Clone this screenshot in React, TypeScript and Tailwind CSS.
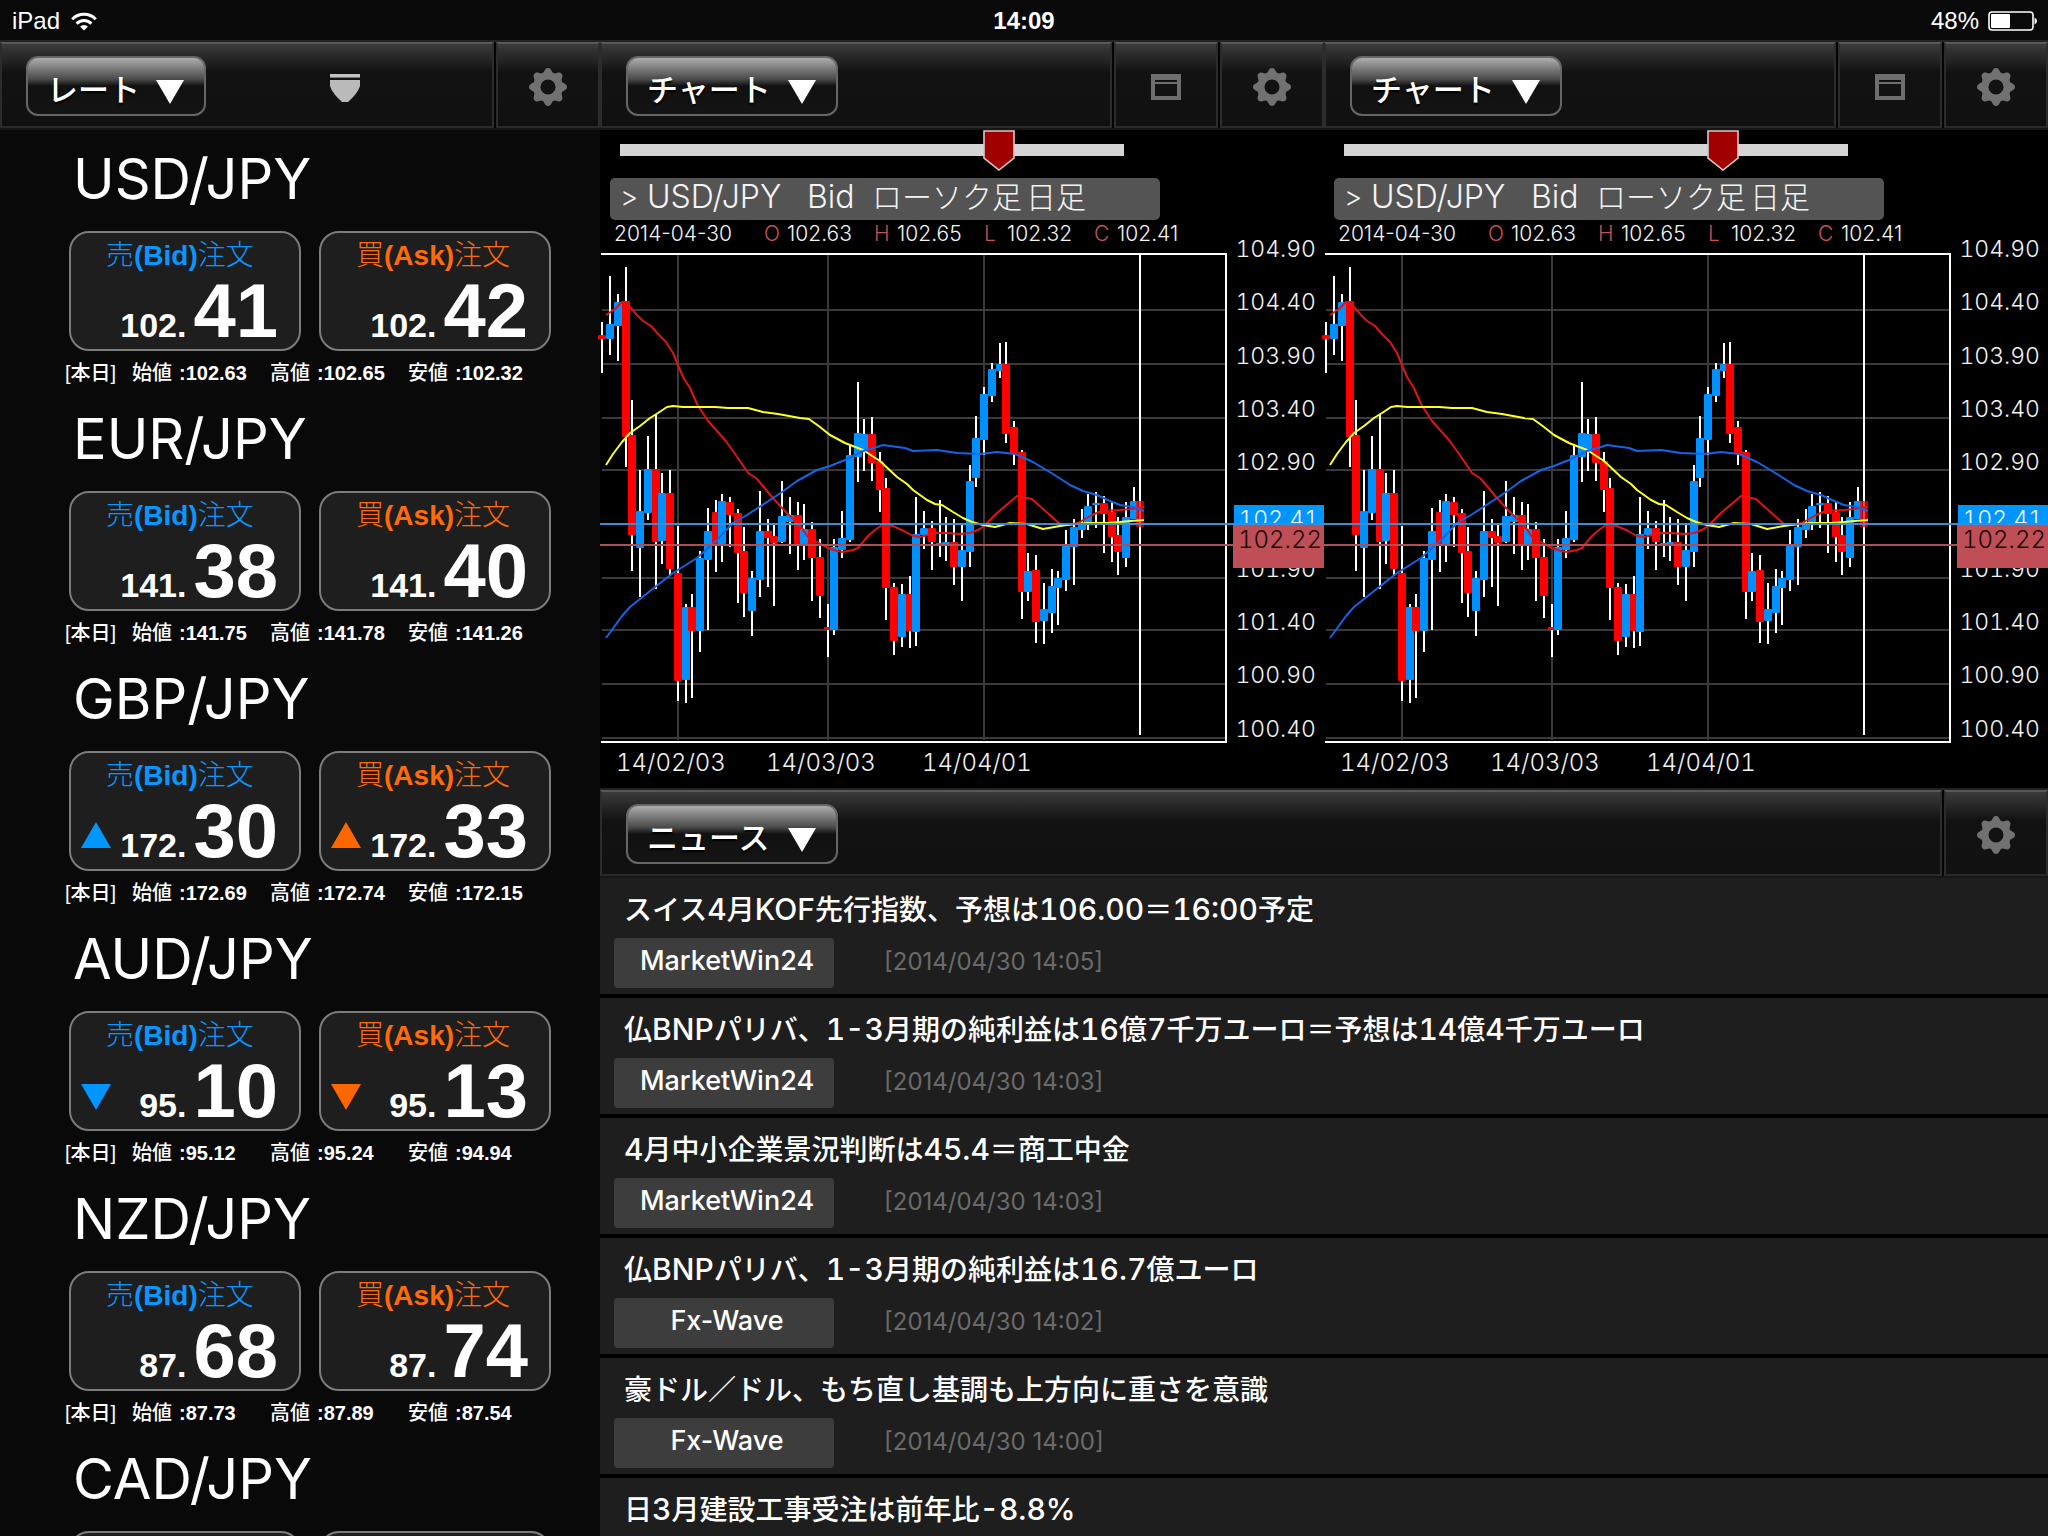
import { useState } from "react";

const UI = "font-['Inter','Noto_Sans_CJK_JP',sans-serif]";
const HELV = "font-['Liberation_Sans','Noto_Sans_CJK_JP',sans-serif]";

type Trend = "up" | "down" | null;
type Rate = {
  pair: string;
  whole: [string, string];
  pips: [string, string];
  trend: Trend;
  open: string;
  high: string;
  low: string;
};

const RATES: Rate[] = [
  { pair: "USD/JPY", whole: ["102.", "102."], pips: ["41", "42"], trend: null, open: "102.63", high: "102.65", low: "102.32" },
  { pair: "EUR/JPY", whole: ["141.", "141."], pips: ["38", "40"], trend: null, open: "141.75", high: "141.78", low: "141.26" },
  { pair: "GBP/JPY", whole: ["172.", "172."], pips: ["30", "33"], trend: "up", open: "172.69", high: "172.74", low: "172.15" },
  { pair: "AUD/JPY", whole: ["95.", "95."], pips: ["10", "13"], trend: "down", open: "95.12", high: "95.24", low: "94.94" },
  { pair: "NZD/JPY", whole: ["87.", "87."], pips: ["68", "74"], trend: null, open: "87.73", high: "87.89", low: "87.54" },
  { pair: "CAD/JPY", whole: ["93.", "93."], pips: ["45", "49"], trend: null, open: "93.60", high: "93.71", low: "93.38" },
];

const NEWS = [
  { title: "スイス4月KOF先行指数、予想は106.00＝16:00予定", source: "MarketWin24", time: "[2014/04/30 14:05]" },
  { title: "仏BNPパリバ、1-3月期の純利益は16億7千万ユーロ＝予想は14億4千万ユーロ", source: "MarketWin24", time: "[2014/04/30 14:03]" },
  { title: "4月中小企業景況判断は45.4＝商工中金", source: "MarketWin24", time: "[2014/04/30 14:03]" },
  { title: "仏BNPパリバ、1-3月期の純利益は16.7億ユーロ", source: "Fx-Wave", time: "[2014/04/30 14:02]" },
  { title: "豪ドル／ドル、もち直し基調も上方向に重さを意識", source: "Fx-Wave", time: "[2014/04/30 14:00]" },
  { title: "日3月建設工事受注は前年比-8.8%", source: "Fx-Wave", time: "[2014/04/30 14:00]" },
];

// x, wick top, body top, body bottom, wick bottom, rising (1) or falling (0)
const CANDLES: number[][] = [
  [2, 72, 85, 89, 123, 0], [10, 26, 74, 89, 105, 1], [18, 44, 52, 76, 111, 1], [26, 17, 51, 187, 217, 0],
  [32, 150, 185, 285, 321, 0], [40, 220, 261, 298, 347, 1], [48, 186, 219, 263, 270, 1], [56, 165, 219, 292, 339, 0],
  [62, 223, 243, 291, 314, 1], [70, 220, 243, 319, 326, 0], [78, 276, 323, 431, 451, 0], [86, 354, 357, 430, 453, 1],
  [92, 344, 357, 381, 448, 0], [100, 301, 308, 381, 402, 1], [108, 258, 281, 310, 380, 1], [116, 250, 262, 295, 322, 0],
  [122, 244, 251, 294, 312, 1], [130, 247, 252, 265, 297, 0], [138, 259, 263, 303, 353, 0], [144, 277, 301, 343, 367, 0],
  [152, 321, 328, 361, 386, 1], [160, 241, 281, 330, 347, 1], [168, 269, 281, 288, 337, 0], [174, 275, 286, 293, 356, 0],
  [182, 231, 266, 292, 293, 1], [190, 247, 265, 272, 304, 1], [198, 252, 265, 294, 320, 0], [204, 254, 279, 294, 310, 1],
  [212, 272, 279, 308, 351, 0], [220, 289, 307, 346, 368, 0], [228, 354, 377, 380, 407, 0], [234, 289, 297, 380, 385, 1],
  [242, 261, 288, 300, 308, 1], [250, 194, 205, 290, 292, 1], [258, 132, 183, 207, 232, 1], [264, 169, 184, 202, 221, 1],
  [272, 167, 184, 213, 231, 0], [280, 202, 211, 240, 262, 0], [286, 228, 238, 338, 370, 0], [294, 333, 337, 391, 405, 0],
  [302, 334, 344, 387, 397, 1], [310, 326, 344, 381, 398, 0], [316, 247, 284, 382, 396, 1], [324, 261, 278, 285, 299, 1],
  [332, 271, 278, 292, 320, 0], [340, 250, 293, 294, 307, 1], [346, 267, 292, 294, 311, 1], [354, 269, 292, 317, 335, 0],
  [362, 274, 300, 317, 351, 1], [370, 215, 231, 302, 317, 1], [376, 166, 188, 228, 237, 1], [384, 137, 144, 190, 205, 1],
  [392, 113, 119, 146, 152, 1], [400, 93, 114, 121, 128, 1], [406, 92, 114, 184, 193, 0], [414, 171, 177, 204, 215, 0],
  [422, 200, 202, 342, 369, 0], [428, 303, 321, 342, 351, 1], [436, 305, 320, 372, 393, 0], [444, 333, 359, 371, 394, 1],
  [452, 319, 336, 363, 383, 1], [458, 321, 328, 338, 375, 1], [466, 280, 295, 330, 341, 1], [474, 269, 277, 297, 335, 1],
  [482, 259, 273, 280, 288, 1], [488, 244, 256, 275, 280, 1], [496, 242, 253, 255, 278, 1], [504, 246, 253, 264, 303, 0],
  [512, 252, 262, 287, 312, 0], [518, 267, 285, 302, 325, 0], [526, 252, 267, 308, 317, 1], [534, 237, 251, 269, 269, 1],
];

const MA_SHORT =
  "6,65 15,59 22,52 30,57 37,65 43,71 51,76 58,84 66,92 73,103 78,115 83,127 90,138 97,154 108,171 125,190 133,201 142,214 148,223 156,228 163,236 172,247 182,258 193,269 202,278 208,287 217,292 228,298 237,301 243,302 253,300 258,298 268,286 275,280 282,275 293,276 304,281 313,286 320,287 328,285 337,283 347,283 360,284 370,283 380,279 385,275 397,263 417,246 432,249 443,259 460,274 467,275 478,273 492,265 502,261 520,260 530,259 544,257";
const MA_LONG =
  "6,215 13,204 22,192 30,183 40,176 50,168 58,163 67,157 73,156 83,157 115,157 128,158 148,158 163,162 178,164 200,168 209,169 220,177 230,185 245,193 263,200 280,211 297,227 307,234 313,240 327,250 335,254 342,255 353,262 363,268 372,272 383,275 395,277 410,273 427,274 443,279 460,276 467,275 487,273 507,273 520,272 530,271 544,270";
const MA_MID =
  "6,388 22,366 30,357 50,341 73,323 97,308 108,298 117,290 133,273 147,265 167,252 182,242 197,231 217,220 230,216 245,210 263,201 277,197 283,195 305,198 313,201 337,200 357,203 380,204 397,202 415,204 433,212 453,224 470,235 483,241 497,245 510,251 520,255 533,257 544,261";

const GRID_Y = [60, 114, 168, 220, 328, 380, 434, 488];
const GRID_X = [78, 228, 384];
const PRICES = ["104.90", "104.40", "103.90", "103.40", "102.90", "", "101.90", "101.40", "100.90", "100.40"];

function Gear() {
  return (
    <svg viewBox="-19 -19 38 38" className="w-[38px] h-[38px]" fill="#717171" aria-hidden="true">
      <path
        fillRule="evenodd"
        d="M0-15A15 15 0 1 1 0 15A15 15 0 1 1 0-15ZM0-7.5A7.5 7.5 0 1 0 0 7.5A7.5 7.5 0 1 0 0-7.5Z"
      />
      {[0, 45, 90, 135, 180, 225, 270, 315].map((a) => (
        <path key={a} transform={`rotate(${a})`} d="M-5.5-13L-2.8-17.6Q-2.2-19 0-19Q2.2-19 2.8-17.6L5.5-13Z" />
      ))}
    </svg>
  );
}

function WindowIcon() {
  return (
    <svg viewBox="0 0 30 26" className="w-[30px] h-[26px]" fill="#6e6e6e" aria-hidden="true">
      <path fillRule="evenodd" d="M0 0H30V26H0ZM4 6H26V8H4ZM4 10H26V22H4Z" />
    </svg>
  );
}

const CELL =
  "border-2 border-t-[#585858] border-x-[#2c2c2c] border-b-[#2a2a2a] bg-[linear-gradient(#3b3b3b,#121212_28px,#111)] flex items-center";

function IconCell({ label, children }: { label: string; children: React.ReactNode }) {
  return (
    <button type="button" aria-label={label} className={`${CELL} w-[104px] justify-center pt-[3px]`}>
      {children}
    </button>
  );
}

function Toolbar({ children }: { children: React.ReactNode }) {
  return (
    <div className="flex h-[90px] shrink-0 gap-[2px] bg-[#040404] border-t-2 border-b-2 border-t-[#222] border-b-[#171515]">
      {children}
    </div>
  );
}

function PanelSelect({ value, wide }: { value: string; wide?: boolean }) {
  return (
    <div className={`relative h-[60px] ${wide ? "w-[212px]" : "w-[180px]"}`}>
      <select
        aria-label="パネル"
        defaultValue={value}
        className={`${UI} h-full w-full appearance-none rounded-[12px] border-2 border-[#666] bg-[linear-gradient(#adadad,#4a4a4a_38%,#111_50%,#141414)] pl-[19px] pt-[8px] text-[31px] font-medium text-white [text-shadow:0_2px_2px_#000]`}
      >
        {["レート", "チャート", "ニュース"].map((o) => (
          <option key={o}>{o}</option>
        ))}
      </select>
      <svg viewBox="0 0 28 24" className="pointer-events-none absolute right-[22px] top-[24px] h-6 w-7" fill="#fff" aria-hidden="true">
        <path d="M0 0H28L14 24Z" />
      </svg>
    </div>
  );
}

function StatusBar() {
  return (
    <header className={`${HELV} grid h-[40px] shrink-0 grid-cols-3 items-center bg-[#090909] pt-[2px] text-[24px] leading-8`}>
      <div className="flex items-center gap-[11px] pl-[12px]">
        <span>iPad</span>
        <svg viewBox="0 0 26 19" className="h-[19px] w-[26px]" fill="none" stroke="#fff" strokeWidth="3" aria-hidden="true">
          <path d="M1.2 7.2A16.5 16.5 0 0 1 24.8 7.2" />
          <path d="M5.6 11.6A10.4 10.4 0 0 1 20.4 11.6" />
          <path d="M13 18.6L9 14.6A5.7 5.7 0 0 1 17 14.6Z" fill="#fff" stroke="none" />
        </svg>
      </div>
      <div className="text-center font-bold">14:09</div>
      <div className="flex items-center justify-end gap-[9px] pr-[11px]">
        <span>48%</span>
        <svg viewBox="0 0 49 20" className="h-5 w-[49px]" fill="none" aria-hidden="true">
          <rect x="1" y="1" width="44" height="18" rx="3" stroke="#fff" strokeWidth="1.6" />
          <rect x="3" y="3" width="19" height="14" rx="1" fill="#fff" />
          <path d="M46.5 6.5Q49 7.5 49 10Q49 12.500 46.500 13.5Z" fill="#fff" />
        </svg>
      </div>
    </header>
  );
}

function QuoteButton({ side, whole, pips, trend }: { side: "bid" | "ask"; whole: string; pips: string; trend: Trend }) {
  const bid = side === "bid";
  return (
    <button
      type="button"
      className={`${HELV} flex h-[120px] w-[232px] flex-col items-stretch justify-start rounded-[20px] border-2 border-[#7c7c7c] bg-[#1e1e1e] pt-[9px] text-left`}
    >
      <span className={`pl-[35px] text-[28px] font-light leading-7 ${bid ? "text-[#0a96ff]" : "text-[#ff6a0a]"}`}>
        {bid ? "売" : "買"}
        <b className="font-bold">{bid ? "(Bid)" : "(Ask)"}</b>
        注文
      </span>
      <span className="mt-[11px] flex h-[60px] items-baseline pl-[10px] pr-[21px] font-bold leading-[60px] text-white">
        {trend && (
          <svg
            viewBox="0 0 30 26"
            className={`h-[26px] w-[30px] self-start ${trend === "up" ? "mt-[21px]" : "mt-[23px]"}`}
            fill={bid ? "#0096ff" : "#ff6600"}
            role="img"
            aria-label={trend === "up" ? "上昇" : "下落"}
          >
            <path d={trend === "up" ? "M15 0L30 26H0Z" : "M0 0H30L15 26Z"} />
          </svg>
        )}
        <span className="ml-auto text-[34px]">{whole}</span>
        <span className="ml-[7px] text-[76px]">{pips}</span>
      </span>
    </button>
  );
}

function RateBlock({ rate }: { rate: Rate }) {
  const stats: [string, string][] = [
    ["始値", rate.open],
    ["高値", rate.high],
    ["安値", rate.low],
  ];
  return (
    <section className="h-[260px] shrink-0 pt-[19px]">
      <h2 className={`${UI} pl-[73px] text-[56px] leading-[60px]`}>{rate.pair}</h2>
      <div className="mt-[22px] flex gap-[18px] pl-[69px]">
        <QuoteButton side="bid" whole={rate.whole[0]} pips={rate.pips[0]} trend={rate.trend} />
        <QuoteButton side="ask" whole={rate.whole[1]} pips={rate.pips[1]} trend={rate.trend} />
      </div>
      <dl className={`${HELV} mt-[8px] flex pl-[65px] text-[20px] leading-7`}>
        <dt className="w-[67px] font-medium">[本日]</dt>
        {stats.map(([k, v]) => (
          <div key={k} className="flex w-[138px]">
            <dt className="w-[47px] font-medium">{k}</dt>
            <dd className="font-bold">:{v}</dd>
          </div>
        ))}
      </dl>
    </section>
  );
}

function RatePanel() {
  return (
    <aside className="flex min-h-0 flex-col overflow-hidden bg-[#090909]">
      <Toolbar>
        <div className={`${CELL} grow pl-6 pt-[2px]`}>
          <PanelSelect value="レート" />
          <button type="button" aria-label="表示切替" className="ml-[124px] pt-1">
            <svg viewBox="0 0 30 28" className="h-7 w-[30px]" aria-hidden="true">
              <path d="M0 0H30V3H0Z" fill="#c4c4c4" />
              <path d="M0 3H30V4H0Z" fill="#777" />
              <path d="M0 6H30V12Q28 19 18 28H12Q2 19 0 12Z" fill="#bababa" />
            </svg>
          </button>
        </div>
        <IconCell label="設定">
          <Gear />
        </IconCell>
      </Toolbar>
      {RATES.map((r) => (
        <RateBlock key={r.pair} rate={r} />
      ))}
    </aside>
  );
}

function Plot() {
  return (
    <svg
      viewBox="0 -8 724 546"
      className={`${UI} block w-full overflow-visible tabular-nums`}
      role="img"
      aria-label="USD/JPY ローソク足"
    >
      <g stroke="#3a3a3a" strokeWidth="2">
        {GRID_Y.map((y) => (
          <path key={y} d={`M2 ${y}H626`} />
        ))}
        {GRID_X.map((x) => (
          <path key={x} d={`M${x} 4V490`} />
        ))}
      </g>
      {CANDLES.map(([x, hi, top, bottom, lo, rising]) => (
        <g key={x}>
          <rect x={x - 1} y={hi} width="2" height={lo - hi} fill="#fff" />
          <rect x={x - 4} y={top} width="8" height={bottom - top} rx="1" fill={rising ? "#0090ff" : "#ff0000"} />
        </g>
      ))}
      <path d="M1 4H626V492H1" fill="none" stroke="#fff" strokeWidth="2" />
      <path d="M540 4V485" stroke="#fff" strokeWidth="2" />
      <rect x="536" y="251" width="8" height="26" fill="#f00" opacity="0.75" />
      <g fill="none" strokeWidth="2" strokeLinejoin="round">
        <polyline points={MA_SHORT} stroke="#e01414" />
        <polyline points={MA_LONG} stroke="#ffff28" />
        <polyline points={MA_MID} stroke="#1464e6" />
      </g>
      <g fill="#f2f2f2" fontSize="23" fontWeight="300">
        {PRICES.map((p, i) => (
          <text key={i} x="716" y={Math.round(7 + i * 53.3)} textAnchor="end">
            {p}
          </text>
        ))}
        <rect x="634" y="255" width="90" height="20" fill="#0096ff" />
        <text x="719" y="277" textAnchor="end">
          102.41
        </text>
        <rect x="633" y="274" width="91" height="44" fill="#c04e56" />
        <text x="722" y="298" textAnchor="end" fontSize="24" fill="#140606">
          102.22
        </text>
        <g fontSize="24">
          <text x="16" y="521">14/02/03</text>
          <text x="166" y="521">14/03/03</text>
          <text x="322" y="521">14/04/01</text>
        </g>
      </g>
      <path d="M0 274H724" stroke="#3c8cd2" strokeWidth="2" />
      <path d="M0 295H633" stroke="#b04e56" strokeWidth="2" />
    </svg>
  );
}

function Slider() {
  const [pos, setPos] = useState(752);
  return (
    <div className="relative ml-[20px] mr-[200px] flex h-[42px] items-center pb-[2px]">
      <div className="h-[12px] w-full bg-[#d4d4d4]" />
      <svg
        viewBox="0 0 32 41"
        className="absolute top-0 h-[41px] w-8 -translate-x-1/2"
        style={{ left: `${pos / 10}%` }}
        aria-hidden="true"
      >
        <path d="M1 1H31V28L16 40L1 28Z" fill="#a00000" stroke="#d8c8c8" strokeWidth="1.6" />
      </svg>
      <input
        type="range"
        aria-label="表示位置"
        min={0}
        max={1000}
        value={pos}
        onChange={(e) => setPos(Number(e.target.value))}
        className="absolute inset-0 h-full w-full cursor-pointer opacity-0"
      />
    </div>
  );
}

function ChartPanel() {
  const ohlc = [
    ["O", "102.63"],
    ["H", "102.65"],
    ["L", "102.32"],
    ["C", "102.41"],
  ];
  return (
    <section className="min-w-0 bg-black">
      <Toolbar>
        <div className={`${CELL} grow pl-6 pt-[2px]`}>
          <PanelSelect value="チャート" wide />
        </div>
        <IconCell label="全画面">
          <WindowIcon />
        </IconCell>
        <IconCell label="設定">
          <Gear />
        </IconCell>
      </Toolbar>
      <Slider />
      <button
        type="button"
        className={`${UI} ml-[10px] mt-[6px] flex h-[42px] w-[550px] items-center rounded-[5px] bg-[#545454] pb-[4px] pl-[10px] text-left text-[30px] font-light leading-9 text-[#f4f4f4]`}
      >
        <span className="w-[27px] text-[28px]">&gt;</span>
        <span className="w-[160px] text-[32px]">USD/JPY</span>
        <span className="w-[65px] text-[32px]">Bid</span>
        <span>ローソク足</span>
        <span className="ml-[4px]">日足</span>
      </button>
      <div className={`${UI} flex h-[22px] items-center pl-[14px] pt-[6px] text-[21px] font-light leading-6 text-[#f4f4f4]`}>
        <span className="w-[150px]">2014-04-30</span>
        {ohlc.map(([k, v]) => (
          <span key={k} className="flex w-[110px]">
            <span className="w-[23px] text-[#c4505a]">{k}</span>
            {v}
          </span>
        ))}
      </div>
      <Plot />
    </section>
  );
}

function Headline({ text }: { text: string }) {
  return (
    <>
      {text.split(/([\x20-\x7e]+)/).map((run, i) =>
        i % 2 ? (
          <span key={i} className="text-[30px] leading-none tabular-nums">
            {run}
          </span>
        ) : (
          run
        ),
      )}
    </>
  );
}

function NewsPanel() {
  return (
    <section className="flex min-h-0 flex-col overflow-hidden bg-black">
      <Toolbar>
        <div className={`${CELL} grow pl-6 pt-[2px]`}>
          <PanelSelect value="ニュース" wide />
        </div>
        <IconCell label="設定">
          <Gear />
        </IconCell>
      </Toolbar>
      <ul className={UI}>
        {NEWS.map((n, i) => (
          <li key={i} className="h-[120px] border-b-4 border-black bg-[#1e1e1e] pt-[12px]">
            <a href="#" className="block whitespace-nowrap pl-6 text-[28px] font-medium leading-10">
              <Headline text={n.title} />
            </a>
            <div className="mt-[8px] flex items-center pl-[14px]">
              <span className="flex h-[50px] w-[220px] items-center justify-center rounded-[4px] bg-[#3d3d3d] pb-[3px] pl-[6px] text-[27px] font-medium">
                {n.source}
              </span>
              <time className="ml-[50px] pb-[2px] text-[24px] text-[#6a6a6a]">{n.time}</time>
            </div>
          </li>
        ))}
      </ul>
    </section>
  );
}

export default function App() {
  return (
    <div className="flex h-screen flex-col overflow-hidden bg-black text-white">
      <StatusBar />
      <main className="grid min-h-0 grow grid-cols-[600px_1fr]">
        <RatePanel />
        <div className="flex min-h-0 min-w-0 flex-col">
          <div className="grid grid-cols-2">
            <ChartPanel />
            <ChartPanel />
          </div>
          <NewsPanel />
        </div>
      </main>
    </div>
  );
}
